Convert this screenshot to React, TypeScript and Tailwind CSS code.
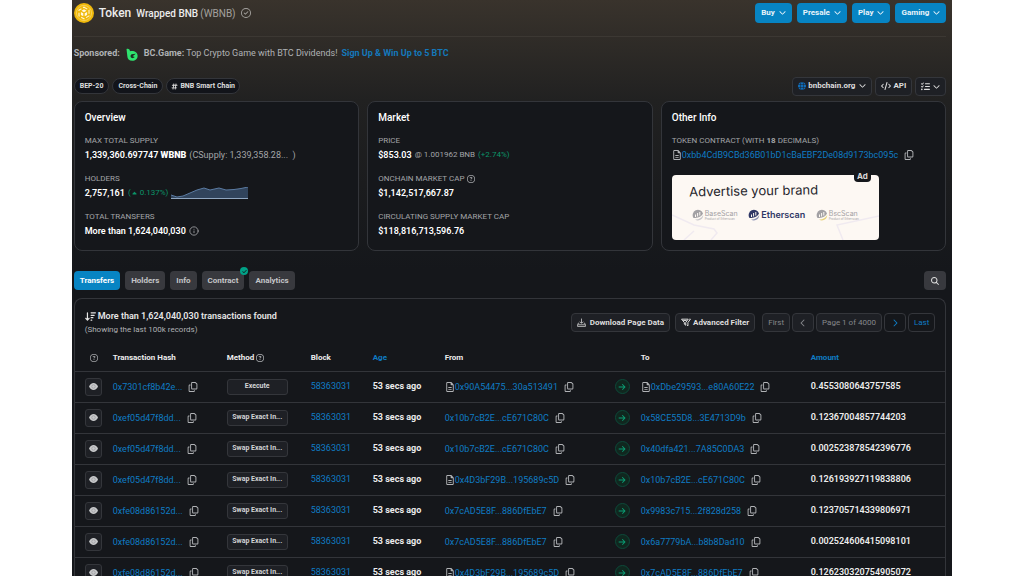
import type { ReactNode } from "react";
import {
  FaArrowDownWideShort,
  FaArrowRight,
  FaCaretUp,
  FaCheck,
  FaChevronDown,
  FaChevronLeft,
  FaChevronRight,
  FaCode,
  FaGlobe,
  FaHashtag,
  FaListCheck,
  FaMagnifyingGlass,
  FaRegCircleCheck,
  FaRegCircleQuestion,
  FaRegCopy,
  FaRegFileLines,
} from "react-icons/fa6";
import { Info } from "lucide-react";

type Address = { text: string; contract?: boolean };

type Transfer = {
  hash: string;
  method: string;
  from: Address;
  to: Address;
  amount: string;
};

const transfers: Transfer[] = [
  { hash: "0x7301cf8b42e...", method: "Execute", from: { text: "0x90A54475...30a513491", contract: true }, to: { text: "0xDbe29593...e80A60E22", contract: true }, amount: "0.4553080643757585" },
  { hash: "0xef05d47f8dd...", method: "Swap Exact In...", from: { text: "0x10b7cB2E...cE671C80C" }, to: { text: "0x58CE55D8...3E4713D9b" }, amount: "0.12367004857744203" },
  { hash: "0xef05d47f8dd...", method: "Swap Exact In...", from: { text: "0x10b7cB2E...cE671C80C" }, to: { text: "0x40dfa421...7A85C0DA3" }, amount: "0.002523878542396776" },
  { hash: "0xef05d47f8dd...", method: "Swap Exact In...", from: { text: "0x4D3bF29B...195689c5D", contract: true }, to: { text: "0x10b7cB2E...cE671C80C" }, amount: "0.126193927119838806" },
  { hash: "0xfe08d86152d...", method: "Swap Exact In...", from: { text: "0x7cAD5E8F...886DfEbE7" }, to: { text: "0x9983c715...2f828d258" }, amount: "0.123705714339806971" },
  { hash: "0xfe08d86152d...", method: "Swap Exact In...", from: { text: "0x7cAD5E8F...886DfEbE7" }, to: { text: "0x6a7779bA...b8b8Dad10" }, amount: "0.002524606415098101" },
  { hash: "0xfe08d86152d...", method: "Swap Exact In...", from: { text: "0x4D3bF29B...195689c5D", contract: true }, to: { text: "0x7cAD5E8F...886DfEbE7" }, amount: "0.126230320754905072" },
];

const menus = ["Buy", "Presale", "Play", "Gaming"];
const tabs = ["Transfers", "Holders", "Info", "Contract", "Analytics"];

function TokenLogo() {
  return (
    <svg viewBox="0 0 20 20" className="size-5" aria-hidden="true">
      <circle cx="10" cy="10" r="10" fill="#f0b90b" />
      <circle cx="10" cy="10" r="7.6" fill="none" stroke="#f8d568" strokeWidth="0.8" />
      <path
        d="M10 4.2l5 2.9v5.8l-5 2.9-5-2.9V7.1z"
        fill="none"
        stroke="#fff4cf"
        strokeWidth="1.1"
        strokeDasharray="3.8 1.8"
      />
      <path d="M10 6.3l2.5 1.5L10 9.3 7.5 7.8zM6.9 8.9l2.4 1.4v3l-2.4-1.4zM13.1 8.9l-2.4 1.4v3l2.4-1.4z" fill="#fff8e1" />
    </svg>
  );
}

function BcGameLogo() {
  return (
    <svg viewBox="0 0 12 13" className="h-[13px] w-3" aria-hidden="true">
      <path d="M.5 1C2 .2 3.8.8 4 3.2c4-.8 7.6 1 7.6 4.6 0 3.2-2.4 5-5.2 5C3 12.8 1.4 11 1.3 8z" fill="#2fe36f" />
      <path d="M9.8 5.8L5.6 6.2C4 7 4.2 9.6 6 10.1c1 .2 2-.2 2.8-1L6.6 8.200z" fill="#1c2a20" />
    </svg>
  );
}

function EyeIcon() {
  return (
    <svg viewBox="0 0 18 14" className="h-[7px] w-[9px]" aria-hidden="true">
      <path d="M0 7C2 3 5 0 9 0s7 3 9 7c-2 4-5 7-9 7s-7-3-9-7z" fill="currentColor" />
      <circle cx="9" cy="7" r="3.5" fill="none" stroke="#909296" strokeWidth="1.2" />
    </svg>
  );
}

function DownloadIcon() {
  return (
    <svg viewBox="0 0 16 16" className="size-[9px]" fill="none" stroke="currentColor" strokeWidth="1.3" aria-hidden="true">
      <path d="M8 1v8M5 6.5l3 3 3-3M4 9H2.5L1 12v3h14v-3l-1.5-3H12M1.5 12h13" />
    </svg>
  );
}

function FilterIcon() {
  return (
    <svg viewBox="0 0 18 16" className="h-[9px] w-[10px]" fill="none" stroke="currentColor" strokeWidth="1.8" aria-hidden="true">
      <path d="M1 2h12L8.5 8v5L6 11V8zM15 2h2l-4.5 6v6l-2-1.5M4 4.5h6" />
    </svg>
  );
}

function HoldersChart() {
  return (
    <svg viewBox="0 0 77 12" className="h-3 w-[77px]" role="img" aria-label="Holders trend">
      <path d="M0 8l6 2 6-1 7-3 7-3 7-2 6 2 9-2 7 2 8-.5 7-1L77 0v11H0z" fill="#31445c" />
      <path d="M0 8l6 2 6-1 7-3 7-3 7-2 6 2 9-2 7 2 8-.5 7-1L77 0" fill="none" stroke="#5b7ba2" />
      <path d="M0 11.5h77" stroke="#8fa6c0" />
    </svg>
  );
}

function ScanLogo({ name, sub, className, arc }: { name: string; sub?: string; className: string; arc: string }) {
  return (
    <div className={`flex items-center gap-px ${className}`}>
      <svg viewBox="0 0 12 12" className="size-3 shrink-0" aria-hidden="true">
        <path d="M1.5 9A5.3 5.3 0 1 1 11 4.5C9 8 6 9 1.5 9z" fill="currentColor" />
        <path d="M3.5 8V5.5M5.6 7.5V4M7.8 6.5V3" stroke="#fdf8f3" strokeWidth="1" />
        <path d="M3 10.5c3.5.3 6.500-1.500 8.200-4.500.3 4-4.700 7.300-8.200 4.500z" fill={arc} />
      </svg>
      <div className="flex flex-col">
        <span className={sub ? "text-[7px] leading-[8px]" : "text-[9px] leading-[10px] font-semibold"}>{name}</span>
        {sub && <span className="text-[3px] leading-[3px]">{sub}</span>}
      </div>
    </div>
  );
}

function Card({ title, children }: { title: string; children: ReactNode }) {
  return (
    <section className="flex min-h-[150px] min-w-0 flex-col gap-[10px] rounded-lg border border-[#33353a] bg-[#15171b] px-[10px] py-[9px]">
      <h2 className="text-[10px] leading-[13px] font-medium text-white">{title}</h2>
      {children}
    </section>
  );
}

function Stat({ label, children }: { label: ReactNode; children: ReactNode }) {
  return (
    <div>
      <div className="flex items-center gap-[3px] text-[8px] leading-[14px] text-[#a3a5a8]">{label}</div>
      <div className="flex items-center gap-[3px] text-[9px] leading-[14px] font-semibold whitespace-nowrap text-white">{children}</div>
    </div>
  );
}

function CopyButton() {
  return (
    <button aria-label="Copy" className="ml-[6px] text-[#b0b2b5]">
      <FaRegCopy className="size-[10px]" />
    </button>
  );
}

function AddressCell({ address }: { address: Address }) {
  return (
    <div className="flex items-center leading-[14px]">
      {address.contract && <FaRegFileLines className="size-[10px] shrink-0 text-[#b0b2b5]" />}
      <a href="#" className="text-[#0f7cc4]">{address.text}</a>
      <CopyButton />
    </div>
  );
}

export default function App() {
  const smallButton = "flex h-[19px] items-center rounded border border-[#34363b] bg-[#1e2025]";

  return (
    <div className="mx-auto w-[86%] bg-[#15171b] bg-[linear-gradient(180deg,#39332c_0px,#212121_100px,#15171b_270px)] pr-[6px] pl-[2px] font-['Roboto',sans-serif] text-[#b0b2b5]">
      {/* Token heading */}
      <header className="flex h-[37px] items-start justify-between border-b border-[#3c3833] pt-[3px]">
        <div className="flex h-5 items-center">
          <TokenLogo />
          <h1 className="ml-[5px] flex items-center text-[#ececec]">
            <span className="text-[12px] font-medium">Token</span>
            <span className="ml-[5px] text-[10px] font-medium">Wrapped BNB</span>
            <span className="ml-[2px] text-[10px] text-[#a3a19e]">(WBNB)</span>
          </h1>
          <FaRegCircleCheck className="ml-[5px] size-[10px] text-[#a3a19e]" />
        </div>
        <nav className="flex gap-[5px]">
          {menus.map((menu) => (
            <button key={menu} className="flex h-5 items-center gap-1 rounded bg-[#0784c3] px-[6px] text-[8px] font-bold text-[#e8f3fa]">
              {menu}
              <FaChevronDown className="mb-[2px] size-[7px]" />
            </button>
          ))}
        </nav>
      </header>

      <p className="flex h-[34px] items-center text-[9px]">
        <span className="font-bold">Sponsored:</span>
        <span className="mx-[6px]"><BcGameLogo /></span>
        <span><strong className="font-bold">BC.Game:</strong> Top Crypto Game with BTC Dividends!</span>
        <a href="#" className="ml-[4px] font-bold text-[#1478bb]">Sign Up &amp; Win Up to 5 BTC</a>
      </p>

      <div className="flex h-[30px] items-center justify-between text-[7px] font-bold text-[#dedede]">
        <div className="flex gap-[3px]">
          <span className="flex h-4 items-center rounded-full border border-[#33353a] bg-[#12141a] px-[5px]">BEP-20</span>
          <span className="flex h-4 items-center rounded-full border border-[#33353a] bg-[#12141a] px-[5px]">Cross-Chain</span>
          <span className="flex h-4 items-center gap-[2px] rounded-full border border-[#33353a] bg-[#12141a] px-[4px]">
            <FaHashtag className="size-[7px]" />
            BNB Smart Chain
          </span>
        </div>
        <div className="flex gap-[3px] text-[8px]">
          <button className={`${smallButton} gap-[2px] px-[5px]`}>
            <FaGlobe className="size-2 text-[#0f6cb8]" />
            bnbchain.org
            <FaChevronDown className="mb-[2px] ml-[2px] size-[7px]" />
          </button>
          <button className={`${smallButton} gap-[2px] px-[5px]`}>
            <FaCode className="size-[10px]" />
            API
          </button>
          <button aria-label="More options" className={`${smallButton} gap-[3px] px-[5px]`}>
            <FaListCheck className="size-[9px]" />
            <FaChevronDown className="size-[7px]" />
          </button>
        </div>
      </div>

      {/* Summary cards */}
      <div className="grid grid-cols-3 gap-2">
        <Card title="Overview">
          <Stat label="MAX TOTAL SUPPLY">
            <span>1,339,360.697747 <b>WBNB</b></span>
            <span className="font-normal text-[#a3a5a8]">(CSupply: 1,339,358.28...&nbsp; )</span>
          </Stat>
          <Stat label="HOLDERS">
            2,757,161
            <span className="flex items-center text-[8px] font-normal text-[#0b9468]">
              (<FaCaretUp className="size-[7px]" />&nbsp;0.137%)
            </span>
            <HoldersChart />
          </Stat>
          <Stat label="TOTAL TRANSFERS">
            More than 1,624,040,030
            <Info className="size-[10px] text-[#a3a5a8]" />
          </Stat>
        </Card>

        <Card title="Market">
          <Stat label="PRICE">
            $853.03
            <span className="text-[8px] font-normal text-[#a3a5a8]">@ 1.001962 BNB</span>
            <span className="text-[8px] font-normal text-[#0b9468]">(+2.74%)</span>
          </Stat>
          <Stat label={<>ONCHAIN MARKET CAP <FaRegCircleQuestion className="size-2" /></>}>$1,142,517,667.87</Stat>
          <Stat label="CIRCULATING SUPPLY MARKET CAP">$118,816,713,596.76</Stat>
        </Card>

        <Card title="Other Info">
          <Stat label={<span>TOKEN CONTRACT (WITH <b>18</b> DECIMALS)</span>}>
            <span className="flex items-center font-normal">
              <AddressCell address={{ text: "0xbb4CdB9CBd36B01bD1cBaEBF2De08d9173bc095c", contract: true }} />
            </span>
          </Stat>
          <a href="#" className="relative mt-[3px] block h-[65px] w-[207px] rounded bg-[#fdf8f3] font-['Inter',sans-serif] text-[#25252b]">
            <svg viewBox="0 0 207 65" className="absolute inset-0" fill="none" stroke="#f0eaf0" strokeWidth="1.5" aria-hidden="true">
              <path d="M0 40l22 10 20 4 3 4-6 7M12 65l10-9M207 41l-42 9 6 15" />
            </svg>
            <span className="relative block -rotate-1 pt-[7px] pl-[17px] text-[13px] leading-4">Advertise your brand</span>
            <span className="relative mt-[11px] flex items-center justify-between px-5">
              <ScanLogo name="BaseScan" sub="Product of Etherscan" className="text-[#a3a1a4]" arc="#c9c7ca" />
              <ScanLogo name="Etherscan" className="text-[#2f3766]" arc="#8d93b5" />
              <ScanLogo name="BscScan" sub="Product of Etherscan" className="text-[#a3a1a4]" arc="#e6d27c" />
            </span>
            <span className="absolute -top-[5px] right-2 rounded bg-[#15171b] px-[3px] text-[8px] leading-3 font-bold text-[#d8d8d8]">Ad</span>
          </a>
        </Card>
      </div>

      {/* Tabs */}
      <div className="mt-5 flex items-center justify-between">
        <div role="tablist" className="flex gap-[5px]">
          {tabs.map((tab) => (
            <button
              key={tab}
              role="tab"
              aria-selected={tab === "Transfers"}
              className={`relative h-[19px] rounded px-[6px] text-[8px] font-bold ${
                tab === "Transfers" ? "bg-[#0784c3] text-white" : "bg-[#38393e] text-[#c4c5c7]"
              }`}
            >
              {tab}
              {tab === "Contract" && (
                <span className="absolute -top-1 -right-1 flex size-2 items-center justify-center rounded-full bg-[#00a186] text-[#15171b]">
                  <FaCheck className="size-[5px]" />
                </span>
              )}
            </button>
          ))}
        </div>
        <button aria-label="Search" className="flex h-[19px] w-[22px] items-center justify-center rounded bg-[#38393e] text-[#dedede]">
          <FaMagnifyingGlass className="size-2" />
        </button>
      </div>

      {/* Transfers table */}
      <section className="mt-2 rounded-t-lg border border-b-0 border-[#33353a]">
        <div className="flex items-start justify-between px-[10px] pt-[11px]">
          <div className="text-[8px] leading-[13px]">
            <h2 className="flex items-center gap-[2px] text-[9px] font-semibold text-[#e6e6e6]">
              <FaArrowDownWideShort className="size-[11px]" />
              More than 1,624,040,030 transactions found
            </h2>
            <p>(Showing the last 100k records)</p>
          </div>
          <div className="mt-[3px] flex items-center text-[8px]">
            <button className={`${smallButton} mr-[5px] gap-1 px-[5px] font-bold text-[#dedede]`}>
              <DownloadIcon />
              Download Page Data
            </button>
            <button className={`${smallButton} mr-[7px] gap-[2px] px-[5px] font-bold text-[#dedede]`}>
              <FilterIcon />
              Advanced Filter
            </button>
            <nav aria-label="Pagination" className="flex gap-[2px] text-[#85878b]">
              <button className={`${smallButton} px-[5px]`}>First</button>
              <button aria-label="Previous page" className={`${smallButton} w-[22px] justify-center`}><FaChevronLeft className="size-2" /></button>
              <span className={`${smallButton} px-[5px]`}>Page 1 of 4000</span>
              <button aria-label="Next page" className="flex h-[19px] w-[22px] items-center justify-center rounded border border-[#34363b] text-[#0f7cc4]"><FaChevronRight className="size-2" /></button>
              <button className="flex h-[19px] items-center rounded border border-[#34363b] px-[5px] text-[#0f7cc4]">Last</button>
            </nav>
          </div>
        </div>

        <table className="mt-[9px] w-full table-fixed border-collapse text-left text-[9px] whitespace-nowrap">
          <colgroup>
            <col className="w-[38px]" />
            <col className="w-[114px]" />
            <col className="w-[84px]" />
            <col className="w-[62px]" />
            <col className="w-[72px]" />
            <col className="w-[166px]" />
            <col className="w-[30px]" />
            <col className="w-[170px]" />
            <col />
          </colgroup>
          <thead>
            <tr className="h-[26px] border-b border-[#33353a] text-[8px] text-[#ececec]">
              <th><FaRegCircleQuestion aria-label="Preview" className="ml-[15px] size-2 text-[#a3a5a8]" /></th>
              <th>Transaction Hash</th>
              <th><span className="flex items-center gap-[2px]">Method <FaRegCircleQuestion className="size-2 text-[#b0b2b5]" /></span></th>
              <th>Block</th>
              <th><a href="#" className="text-[#0f7cc4]">Age</a></th>
              <th>From</th>
              <th aria-label="Direction" />
              <th>To</th>
              <th><a href="#" className="text-[#0f7cc4]">Amount</a></th>
            </tr>
          </thead>
          <tbody>
            {transfers.map((transfer, index) => (
              <tr key={index} className="h-[31px] border-b border-[#33353a]">
                <td>
                  <button aria-label="View details" className="ml-[10px] flex h-[18px] w-[17px] items-center justify-center rounded-[3px] border border-[#34363b] bg-[#1e2025] text-[#c8c9cb]">
                    <EyeIcon />
                  </button>
                </td>
                <td>
                  <AddressCell address={{ text: transfer.hash }} />
                </td>
                <td>
                  <span className="flex h-4 w-[61px] items-center justify-center rounded-[3px] border border-[#34363b] bg-[#1e2025] text-[7px] font-bold text-[#d2d3d5]">
                    {transfer.method}
                  </span>
                </td>
                <td><a href="#" className="text-[#0f7cc4]">58363031</a></td>
                <td className="font-bold text-[#ececec]">53 secs ago</td>
                <td><AddressCell address={transfer.from} /></td>
                <td>
                  <span className="ml-[4px] flex size-[15px] items-center justify-center rounded-full border border-[#0d4a3a] bg-[#10271f] text-[#0b9d74]">
                    <FaArrowRight className="size-2" />
                  </span>
                </td>
                <td><AddressCell address={transfer.to} /></td>
                <td className="font-semibold text-[#ececec]">{transfer.amount}</td>
              </tr>
            ))}
          </tbody>
        </table>
      </section>
    </div>
  );
}
